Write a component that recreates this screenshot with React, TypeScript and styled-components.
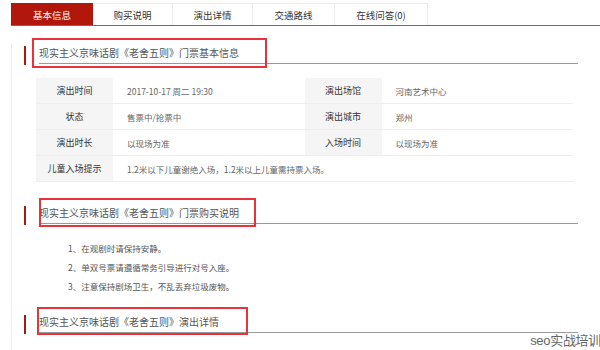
import styled, { createGlobalStyle } from "styled-components";

const GlobalStyle = createGlobalStyle`
  html, body {
    margin: 0;
    padding: 0;
    background: #fff;
    overflow: hidden;
  }
  body {
    font-family: "Noto Sans CJK SC", "Noto Sans", sans-serif;
  }
`;

const Page = styled.div`
  position: relative;
  width: 600px;
  height: 350px;
  padding: 3px 0 0 11px;
  box-sizing: border-box;
  overflow: hidden;
`;

const TabBar = styled.ul`
  display: flex;
  margin: 0;
  padding: 0;
  list-style: none;
  border-bottom: 1px solid #c9473d;
`;

const Tab = styled.li<{ $active?: boolean; $w: number }>`
  width: ${(p) => p.$w}px;
  height: 22px;
  box-sizing: border-box;
  display: flex;
  align-items: center;
  justify-content: center;
  font-size: 9.5px;
  color: ${(p) => (p.$active ? "#fff" : "#333")};
  background: ${(p) => (p.$active ? "#b2170c" : "#fff")};
  border: 1px solid ${(p) => (p.$active ? "#b2170c" : "#ececec")};
  border-bottom: none;
  border-left: ${(p) => (p.$active ? "1px solid #b2170c" : "none")};
`;

const Content = styled.div`
  border-left: 1px solid #eee;
  height: 330px;
  padding-left: 12px;
`;

const Heading = styled.div<{ $mt: number }>`
  display: flex;
  align-items: flex-start;
  margin-top: ${(p) => p.$mt}px;
  margin-right: 22px;
`;

const Marker = styled.span`
  width: 2px;
  height: 19px;
  margin-top: 2px;
  background: #a31a10;
  flex: none;
`;

const Title = styled.h3`
  position: relative;
  flex: 1;
  margin: 0 0 0 13px;
  height: 19px;
  line-height: 18px;
  font-size: 10px;
  font-weight: normal;
  color: #555;
  border-bottom: 1px solid #999;
  white-space: nowrap;
`;

const Annotation = styled.span<{ $l: number; $t: number; $w: number; $h: number }>`
  position: absolute;
  left: ${(p) => p.$l}px;
  top: ${(p) => p.$t}px;
  width: ${(p) => p.$w}px;
  height: ${(p) => p.$h}px;
  box-sizing: border-box;
  border: 2px solid #e8333a;
  pointer-events: none;
`;

const InfoTable = styled.div`
  display: grid;
  grid-template-columns: 77px 1fr 77px 1fr;
  width: 537px;
  margin: 13px 0 0 12px;
`;

const Label = styled.div`
  height: 26px;
  display: flex;
  align-items: center;
  justify-content: center;
  background: #f5f5f5;
  border-bottom: 1px solid #eee;
  box-sizing: border-box;
  font-size: 9px;
  color: #333;
`;

const Value = styled.div<{ $span?: number }>`
  height: 26px;
  display: flex;
  align-items: center;
  padding-left: 14px;
  grid-column: span ${(p) => p.$span || 1};
  border-bottom: 1px solid #eee;
  box-sizing: border-box;
  font-size: 8.5px;
  color: #666;
`;

const Notes = styled.ol`
  margin: 14px 0 0 44px;
  padding: 0;
  list-style: none;
`;

const Note = styled.li`
  font-size: 8.5px;
  line-height: 19px;
  color: #555;
`;

const Watermark = styled.div`
  position: absolute;
  right: -1px;
  bottom: 1px;
  font-family: "Liberation Sans", "Noto Sans CJK SC", sans-serif;
  font-size: 13px;
  color: #666;
  letter-spacing: -0.3px;
`;

const tabs = [
  { name: "基本信息", w: 82 },
  { name: "购买说明", w: 80 },
  { name: "演出详情", w: 80 },
  { name: "交通路线", w: 82 },
  { name: "在线问答(0)", w: 93 },
];

const notes = [
  "1、在观剧时请保持安静。",
  "2、单双号票请遵循常务引导进行对号入座。",
  "3、注意保持剧场卫生，不乱丢弃垃圾废物。",
];

export default function App() {
  return (
    <Page>
      <GlobalStyle />
      <TabBar>
        {tabs.map((t, i) => (
          <Tab key={t.name} $w={t.w} $active={i === 0}>
            {t.name}
          </Tab>
        ))}
      </TabBar>
      <Content>
        <Heading $mt={18}>
          <Marker />
          <Title>
            现实主义京味话剧《老舍五则》门票基本信息
            <Annotation $l={-7} $t={-6} $w={235} $h={30} />
          </Title>
        </Heading>
        <InfoTable>
          <Label>演出时间</Label>
          <Value>2017-10-17 周二 19:30</Value>
          <Label>演出场馆</Label>
          <Value>河南艺术中心</Value>
          <Label>状态</Label>
          <Value>售票中/抢票中</Value>
          <Label>演出城市</Label>
          <Value>郑州</Value>
          <Label>演出时长</Label>
          <Value>以现场为准</Value>
          <Label>入场时间</Label>
          <Value>以现场为准</Value>
          <Label>儿童入场提示</Label>
          <Value $span={3}>1.2米以下儿童谢绝入场，1.2米以上儿童需持票入场。</Value>
        </InfoTable>
        <Heading $mt={22}>
          <Marker />
          <Title>
            现实主义京味话剧《老舍五则》门票购买说明
            <Annotation $l={0} $t={-6} $w={217} $h={29} />
          </Title>
        </Heading>
        <Notes>
          {notes.map((n) => (
            <Note key={n}>{n}</Note>
          ))}
        </Notes>
        <Heading $mt={17}>
          <Marker />
          <Title>
            现实主义京味话剧《老舍五则》演出详情
            <Annotation $l={-2} $t={-6} $w={211} $h={28} />
          </Title>
        </Heading>
      </Content>
      <Watermark>seo实战培训</Watermark>
    </Page>
  );
}
